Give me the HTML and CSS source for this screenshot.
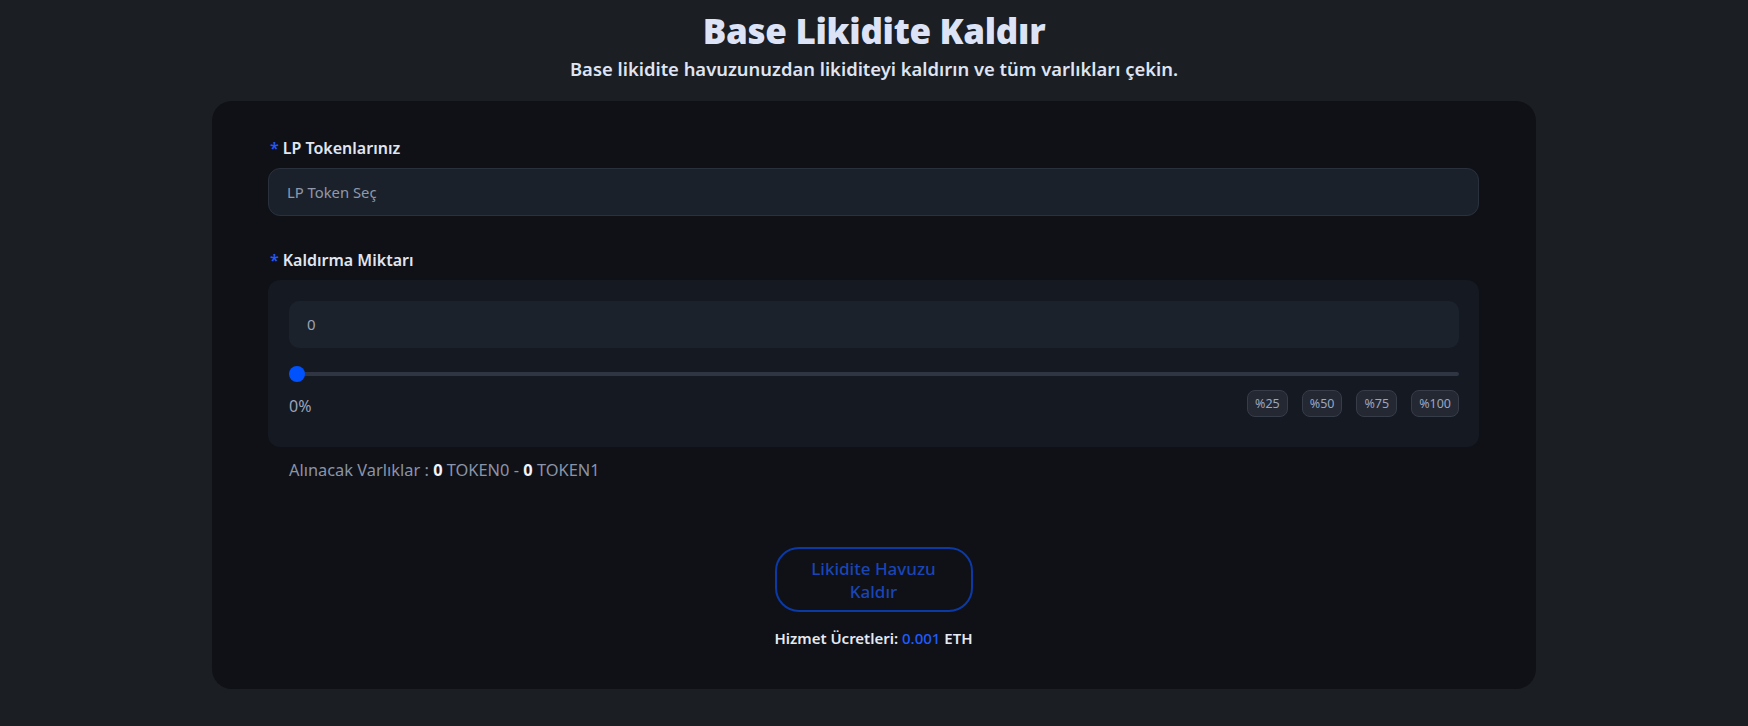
FILE: index.html
```html
<!DOCTYPE html>
<html lang="tr">
<head>
    <meta charset="UTF-8">
    <meta name="viewport" content="width=device-width, initial-scale=1.0">
    <title>Base Likidite Kaldır</title>
    <link rel="stylesheet" href="styles.css">
</head>
<body>
    <div class="head">
        <h1>Base Likidite Kaldır</h1>
        <p>Base likidite havuzunuzdan likiditeyi kaldırın ve tüm varlıkları çekin.</p>
    </div>

    <div id="root">
        <div class="field">
            <label><span class="req">*</span>LP Tokenlarınız</label>
            <div class="select">LP Token Seç</div>
        </div>

        <div class="field">
            <label><span class="req">*</span>Kaldırma Miktarı</label>
            <div class="amount">
                <div class="amount-input">0</div>
                <input class="range" type="range" min="0" max="100" value="0">
                <div class="amount-foot">
                    <span class="pct">0%</span>
                    <div class="quick">
                        <button>%25</button>
                        <button>%50</button>
                        <button>%75</button>
                        <button>%100</button>
                    </div>
                </div>
            </div>
        </div>

        <div class="receive">Alınacak Varlıklar : <b>0</b> TOKEN0 - <b>0</b> TOKEN1</div>

        <div class="submit">
            <button class="remove">Likidite Havuzu Kaldır</button>
            <div class="fee">Hizmet Ücretleri: <span>0.001</span> ETH</div>
        </div>
    </div>
</body>
</html>
```

FILE: styles.css
```css
body {
    margin: 0;
    background: #1b1e23;
    font-family: "Noto Sans", "Open Sans", sans-serif;
    color: #dfe4f2;
}
.head {
    text-align: center;
    padding-top: 11px;
}
.head h1 {
    margin: 0;
    font-size: 35px;
    line-height: 40px;
    font-weight: 900;
    letter-spacing: -0.3px;
    color: #dde3f6;
}
.head p {
    margin: 6px 0 0;
    font-size: 18.4px;
    line-height: 24px;
    font-weight: 600;
    color: #dfe4f2;
}
#root {
    width: 1324px;
    box-sizing: border-box;
    margin: 20px auto 0;
    padding: 37px 57px 41px 56px;
    background: #0f1117;
    border-radius: 20px;
}
.field {
    margin-bottom: 34px;
}
.field label {
    display: block;
    height: 20px;
    line-height: 20px;
    margin-bottom: 10px;
    padding-left: 2px;
    font-size: 16px;
    font-weight: 600;
    color: #e0e6f2;
}
.req {
    color: #2457ff;
    margin-right: 4px;
}
.select {
    height: 48px;
    box-sizing: border-box;
    padding: 0 18px;
    line-height: 46px;
    font-size: 14.8px;
    color: #8f99ab;
    background: #1b212b;
    border: 1px solid #2a313d;
    border-radius: 12px;
}
.amount {
    background: #151922;
    border-radius: 12px;
    padding: 21px 20px 30px 21px;
}
.amount-input {
    height: 47px;
    line-height: 47px;
    padding: 0 18px;
    font-size: 15px;
    color: #9aa3b5;
    background: #1c222c;
    border-radius: 10px;
}
.range {
    -webkit-appearance: none;
    appearance: none;
    display: block;
    width: 100%;
    height: 4px;
    margin: 24px 0 14px;
    background: #2f3542;
    border-radius: 2px;
    outline: none;
}
.range::-webkit-slider-thumb {
    -webkit-appearance: none;
    width: 16px;
    height: 16px;
    border-radius: 50%;
    background: #0052ff;
    border: none;
}
.amount-foot {
    display: flex;
    justify-content: space-between;
    align-items: center;
    height: 27px;
}
.pct {
    font-size: 16px;
    color: #9aa3b8;
    padding-top: 4px;
}
.quick {
    display: flex;
    gap: 14px;
}
.quick button {
    height: 27px;
    padding: 0 7px;
    font-family: inherit;
    font-size: 12.5px;
    color: #9aa6c0;
    background: #232833;
    border: 1px solid #363c48;
    border-radius: 8px;
}
.receive {
    margin-top: -21px;
    padding-left: 21px;
    line-height: 20px;
    font-size: 16.4px;
    color: #8a94a8;
}
.receive b {
    font-weight: 700;
    color: #f0f3fa;
}
.submit {
    display: flex;
    flex-direction: column;
    align-items: center;
    margin-top: 67px;
}
.remove {
    width: 198px;
    height: 65px;
    padding: 0 28px;
    font-family: inherit;
    font-size: 17px;
    font-weight: 500;
    line-height: 23px;
    color: #1a45b6;
    background: transparent;
    border: 2px solid #0b3aa6;
    border-radius: 24px;
}
.fee {
    margin-top: 16px;
    line-height: 20px;
    font-size: 15px;
    font-weight: 600;
    color: #e6e9f2;
}
.fee span {
    font-weight: 500;
    color: #1f5bff;
}
```
